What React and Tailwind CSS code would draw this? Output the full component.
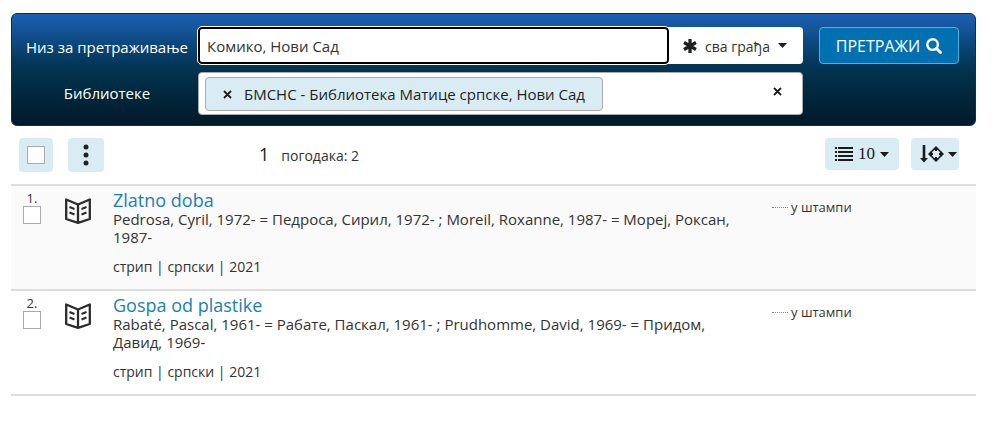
const results = [
  {
    number: 1,
    title: "Zlatno doba",
    authors:
      "Pedrosa, Cyril, 1972- = Педроса, Сирил, 1972- ; Moreil, Roxanne, 1987- = Мореј, Роксан, 1987-",
    meta: "стрип | српски | 2021",
    status: "у штампи",
  },
  {
    number: 2,
    title: "Gospa od plastike",
    authors:
      "Rabaté, Pascal, 1961- = Рабате, Паскал, 1961- ; Prudhomme, David, 1969- = Придом, Давид, 1969-",
    meta: "стрип | српски | 2021",
    status: "у штампи",
  },
];

function Caret() {
  return (
    <svg width="9" height="5" viewBox="0 0 9 5" fill="currentColor" aria-hidden="true" className="shrink-0">
      <path d="M0 0h9L4.500 5z" />
    </svg>
  );
}

function CloseIcon() {
  return (
    <svg width="9" height="9" viewBox="0 0 9 9" stroke="currentColor" strokeWidth="1.800" aria-hidden="true">
      <path d="M1 1l7 7M8 1L1 8" />
    </svg>
  );
}

function AsteriskIcon() {
  return (
    <svg width="14" height="14" viewBox="0 0 14 14" stroke="currentColor" strokeWidth="3.200" aria-hidden="true">
      <path d="M7 0v14M1 3.500l12 7M13 3.500l-12 7" />
    </svg>
  );
}

function SearchIcon() {
  return (
    <svg width="16" height="16" viewBox="0 0 16 16" fill="none" stroke="currentColor" aria-hidden="true">
      <circle cx="6.600" cy="6.600" r="5.300" strokeWidth="2.400" />
      <path d="M10.500 10.500l4 4" strokeWidth="3" strokeLinecap="round" />
    </svg>
  );
}

function ListIcon() {
  return (
    <svg width="18" height="14" viewBox="0 0 18 14" fill="currentColor" aria-hidden="true">
      <path d="M0 0h2v2H0zM3 0h15v2H3zM0 4h2v2H0zM3 4h15v2H3zM0 8h2v2H0zM3 8h15v2H3zM0 12h2v2H0zM3 12h15v2H3z" />
    </svg>
  );
}

function ArrowDownIcon() {
  return (
    <svg width="8" height="18" viewBox="0 0 8 18" fill="currentColor" aria-hidden="true">
      <path d="M2.700 0h2.600v13H8l-4 4.500L0 13h2.700z" />
    </svg>
  );
}

function CrosshairsIcon() {
  return (
    <svg width="16" height="16" viewBox="0 0 16 16" fill="none" stroke="currentColor" aria-hidden="true">
      <circle cx="8" cy="8" r="5" strokeWidth="1.600" />
      <path d="M8 1v4M8 11v4M1 8h4M11 8h4" strokeWidth="2" />
      <path d="M8 0l3 3H5zM8 16l3-3H5zM0 8l3-3v6zM16 8l-3-3v6z" fill="currentColor" stroke="none" />
    </svg>
  );
}

function BookIcon() {
  return (
    <svg width="26" height="26" viewBox="0 0 26 26" fill="none" stroke="#2b2b2b" aria-hidden="true">
      <path
        d="M1.200 1.500L13 6.500 24.800 1.500V21L13 24.800 1.200 21zM13 6.500V24.500"
        strokeWidth="2.300"
        strokeLinejoin="round"
      />
      <path d="M4.500 9l5 2M4.500 14.500l5 2M16.500 11l5-2M16.500 16.500l5-2" strokeWidth="2" />
    </svg>
  );
}

function SearchPanel() {
  return (
    <form
      onSubmit={(e) => e.preventDefault()}
      className="grid grid-cols-[180px_minmax(0,1fr)_140px] gap-x-4 gap-y-2 rounded-md border border-[#14285a] bg-linear-to-b from-[#1c60b4] via-[#023350] to-[#001a28] pt-[13px] pr-4 pb-[10px] pl-1.5 text-[#1f1f1f]"
    >
      <div className="col-span-2 flex items-center">
        <label htmlFor="query" className="w-[180px] shrink-0 pt-1 pl-2 text-[15px] text-white">
          Низ за претраживање
        </label>
        <div className="flex h-[37px] min-w-0 flex-1 rounded bg-white">
          <input
            id="query"
            type="text"
            defaultValue="Комико, Нови Сад"
            className="min-w-0 flex-1 rounded border-2 border-black bg-white px-[7px] pt-0.5 text-[15px] text-[#333] outline outline-white"
          />
          <div className="relative flex w-[134px] items-center">
            <span className="pointer-events-none absolute left-3.5">
              <AsteriskIcon />
            </span>
            <select
              aria-label="Врста грађе"
              className="h-full w-full appearance-none rounded bg-transparent pt-0.5 pl-9 text-sm text-[#333]"
            >
              <option>сва грађа</option>
            </select>
            <span className="pointer-events-none absolute right-4">
              <Caret />
            </span>
          </div>
        </div>
      </div>
      <button
        type="submit"
        className="flex h-[37px] items-center justify-center gap-1.5 rounded border border-[#4fb0da] bg-[#0070b0] text-base text-white"
      >
        ПРЕТРАЖИ
        <SearchIcon />
      </button>
      <div className="col-span-2 flex items-center">
        <span id="libraries" className="w-[180px] shrink-0 pr-0.5 text-center text-[15px] text-white">
          Библиотеке
        </span>
        <div
          role="group"
          aria-labelledby="libraries"
          className="flex h-[43px] min-w-0 flex-1 items-center justify-between rounded border border-[#aaa] bg-white pr-5 pl-1.5"
        >
          <span className="flex h-[34px] w-[398px] items-center gap-3 rounded border border-[#aaa] bg-[#d9ecf3] pt-0.5 pl-[17px] text-[15px] whitespace-nowrap">
            <button type="button" aria-label="Уклони библиотеку">
              <CloseIcon />
            </button>
            БМСНС - Библиотека Матице српске, Нови Сад
          </span>
          <button type="button" aria-label="Уклони све" className="pb-1">
            <CloseIcon />
          </button>
        </div>
      </div>
    </form>
  );
}

function Toolbar() {
  return (
    <div className="flex items-start py-3 pr-[17px] pl-2">
      <label className="flex h-[34px] w-[34px] items-center justify-center rounded bg-[#d9ecf3]">
        <input
          type="checkbox"
          aria-label="Изабери све"
          className="size-[18px] appearance-none border border-[#aaa] bg-white checked:bg-[#1b7fb5]"
        />
      </label>
      <button
        type="button"
        aria-label="Још опција"
        className="ml-[15px] flex h-[34px] w-9 items-center justify-center rounded bg-[#d9ecf3] text-[#222]"
      >
        <svg width="6" height="22" viewBox="0 0 6 22" fill="currentColor" aria-hidden="true">
          <circle cx="3" cy="3" r="2.500" />
          <circle cx="3" cy="11" r="2.500" />
          <circle cx="3" cy="19" r="2.500" />
        </svg>
      </button>
      <p className="ml-[155px] flex h-[34px] items-baseline gap-3 pt-0.5">
        <span className="text-lg leading-7 text-[#222]">1</span>
        <span className="text-sm">погодака: 2</span>
      </p>
      <div className="ml-auto flex gap-3 text-[#1a1a1a]">
        <button
          type="button"
          aria-label="Број погодака по страници: 10"
          className="flex h-8 w-[74px] items-center justify-center gap-[5px] rounded bg-[#d9ecf3] font-['Liberation_Serif',serif] text-[17px]"
        >
          <ListIcon />
          10
          <Caret />
        </button>
        <button
          type="button"
          aria-label="Сортирање"
          className="flex h-8 w-12 items-center justify-end rounded bg-[#d9ecf3] pr-0.5"
        >
          <ArrowDownIcon />
          <CrosshairsIcon />
          <span className="ml-1">
            <Caret />
          </span>
        </button>
      </div>
    </div>
  );
}

function Result({ item }) {
  return (
    <li className="grid h-[105px] grid-cols-[102px_minmax(0,634px)_1fr] border-b-2 border-[#ddd] odd:bg-[#fafafa]">
      <div className="flex items-start gap-6 pl-3">
        <label className="flex flex-col items-center pt-1 text-[13px] leading-4">
          {item.number}.
          <input
            type="checkbox"
            className="size-[18px] appearance-none border border-[#aaa] bg-white checked:bg-[#1b7fb5]"
          />
        </label>
        <span className="pt-3">
          <BookIcon />
        </span>
      </div>
      <div className="pt-1">
        <h2 className="text-lg leading-5">
          <a href="#result" className="text-[#1b7fb5]">
            {item.title}
          </a>
        </h2>
        <p className="text-[15px] leading-[18px]">{item.authors}</p>
        <p className="mt-3 text-sm leading-[18px]">{item.meta}</p>
      </div>
      <div className="flex items-center gap-[3px] self-start pt-3 pl-[25px] text-[13px] leading-[18px]">
        <span className="w-4 border-t border-dotted border-[#888]" />
        {item.status}
      </div>
    </li>
  );
}

export default function App() {
  return (
    <main className="bg-white pt-[13px] pr-4 pl-[11px] font-['Open_Sans','Noto_Sans',sans-serif] text-[#333]">
      <SearchPanel />
      <Toolbar />
      <ol className="border-t-2 border-[#ddd]">
        {results.map((item) => (
          <Result key={item.number} item={item} />
        ))}
      </ol>
    </main>
  );
}
